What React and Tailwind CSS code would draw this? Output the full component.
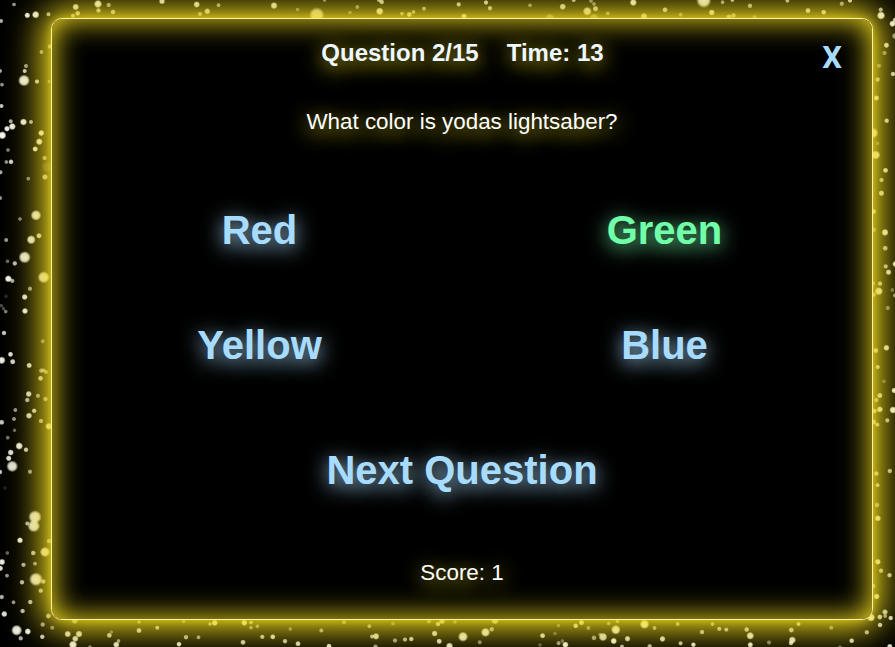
import React from "react";

// Star field: [x, y, radius, opacity]
const STARS = [
  // left strip, top
  [14, 4.5, 1.6, 0.6], [27.3, 15.3, 2.4, 0.95], [35.7, 14.7, 3.2, 0.95], [48.5, 14.3, 1.8, 0.7], [1, 21, 1.8, 0.7],
  [50, 46.5, 2, 0.6], [41.5, 52, 1.7, 0.6], [26, 66, 1.8, 0.6], [24.7, 71, 1.8, 0.8], [24, 80.5, 5.4, 0.95],
  [37, 81.5, 1.9, 0.8], [49, 81.5, 1.3, 0.4], [0, 71, 1.7, 0.7], [2, 84.7, 1.6, 0.6], [1.5, 106, 1.8, 0.8],
  [10.7, 121.3, 1.8, 0.7], [12.3, 126.5, 3, 0.95], [7, 128.7, 2.4, 0.95], [2.3, 135.3, 3.5, 1], [23.5, 122, 3, 0.95],
  [31, 122, 1.7, 0.7], [41.3, 133, 2.6, 0.9], [39.3, 141.7, 2.9, 0.9], [35.2, 149, 2.3, 0.9], [8, 150, 1.6, 0.5],
  [6.3, 162, 1.6, 0.6], [11, 161.8, 2.1, 0.85], [44.7, 158, 2, 0.6], [0.5, 172.3, 1.8, 0.7], [45, 177, 2.4, 0.7],
  [47, 167, 5, 0.15], [28.3, 178.7, 1.7, 0.5], [0, 198, 1.8, 0.6], [36, 215.3, 4.8, 0.9], [20, 219, 1.6, 0.5],
  // left strip, middle
  [39, 235.8, 2.3, 0.8], [31.2, 239.7, 4, 0.9], [6.2, 240, 1.8, 0.6], [24.7, 257.3, 5.6, 0.92], [7.5, 261.3, 1.7, 0.4],
  [14.8, 263.4, 2, 0.75], [8.3, 278.8, 3, 0.98], [12.3, 280.8, 1.9, 0.7], [43.7, 277.3, 5.5, 0.85], [30, 288.7, 1.9, 0.6],
  [24.7, 297, 2.5, 0.9], [25, 311, 2.5, 0.95], [6, 296.3, 1.6, 0.15], [1.3, 305.7, 1.5, 0.3], [3.5, 308.7, 1.5, 0.3],
  [5.7, 311.6, 1.6, 0.5], [4, 333, 2, 0.8], [42.7, 341.3, 1.8, 0.45], [10.5, 354.3, 2.2, 0.9], [1.7, 360.3, 3.3, 0.95],
  [12.7, 361.7, 2.3, 0.85], [29.2, 365.4, 2.3, 0.85], [41.3, 370.6, 2, 0.6], [43.7, 370.4, 1.8, 0.5], [46, 372, 1.8, 0.5],
  [40.6, 378.3, 2.2, 0.75], [28.7, 394, 2.6, 0.85], [27.3, 400, 2, 0.7], [38, 395.8, 1.8, 0.6], [45.5, 399, 2, 0.6],
  [15.3, 410, 1.7, 0.6], [34.2, 410.8, 2, 0.8], [29, 415.7, 2.6, 0.85], [14, 419, 1.7, 0.6], [1.7, 422.3, 2.2, 0.8],
  [41, 421, 1.9, 0.65], [48.8, 426.3, 3, 0.8], [14.5, 430.3, 1.5, 0.4],
  // left strip, bottom
  [7.7, 437.7, 1.7, 0.45], [19.2, 446, 3.2, 0.95], [26, 449.7, 2, 0.8], [10.7, 452.5, 2.6, 0.9], [8.7, 458.3, 2.4, 0.9],
  [12.2, 466.3, 5.3, 0.9], [0, 472, 2, 0.8], [30, 471.7, 1.9, 0.6], [5, 488, 1.7, 0.12], [35, 517, 6.2, 0.9],
  [33.8, 526, 5.8, 0.9], [27.3, 523.5, 1.8, 0.7], [20, 540.3, 2.5, 0.95], [49, 541, 2, 0.6], [7.3, 553, 1.6, 0.4],
  [33.3, 553, 2.1, 0.75], [45, 552, 4.6, 0.85], [2, 562, 2.7, 0.95], [0.3, 568.3, 2.4, 0.9], [23.5, 564.8, 1.9, 0.7],
  [35, 563.7, 1.7, 0.6], [7, 575.7, 1.7, 0.6], [36, 579.3, 6.4, 0.9], [43.3, 581.5, 2, 0.7], [22, 582.3, 2, 0.75],
  [40.8, 590.7, 2, 0.7], [1.7, 597, 2, 0.7], [13.5, 602.3, 1.7, 0.6], [30.3, 602, 2, 0.75], [22.6, 611, 2, 0.75],
  [4.3, 614, 2.6, 0.9], [48.4, 616, 2.2, 0.7],
  // bottom strip
  [16.7, 630.3, 5, 0.95], [27.8, 631.5, 2.7, 0.95], [20.7, 638.3, 2, 0.7], [42.7, 624.5, 2, 0.6], [52.3, 627.7, 1.8, 0.5],
  [42.3, 636.8, 2, 0.8], [67.7, 634, 2.8, 0.85], [79, 634, 3, 0.85], [75.3, 638.7, 2.7, 0.85], [73, 644.7, 3.6, 0.95],
  [74.7, 620.5, 3, 0.6], [109.3, 635.3, 2.2, 0.75], [111.3, 632, 1.4, 0.4], [116.3, 644.7, 2.7, 0.9], [118.5, 641, 1.6, 0.6],
  [90, 647, 1.5, 0.5], [139, 630.5, 2.2, 0.8], [139, 622, 1.5, 0.5], [157.3, 627.7, 1.8, 0.7], [179, 644.2, 2.1, 0.9],
  [186, 637.2, 2, 0.7], [198.5, 637.3, 1.7, 0.6], [183.7, 621.5, 1.6, 0.4], [214.7, 622.8, 2.6, 0.85], [210, 624, 1.5, 0.6],
  [244.3, 622.7, 2.6, 0.85], [251, 622.5, 1.7, 0.6], [251, 627.7, 1.6, 0.5], [257.3, 626.3, 1.6, 0.5], [243, 642.3, 2.2, 0.8],
  [262.3, 636.8, 1.9, 0.75], [272.8, 636.8, 2.2, 0.85], [285, 641.2, 2, 0.75], [298, 643.7, 2.2, 0.85], [290.3, 629, 1.6, 0.4],
  [321.3, 630.5, 1.8, 0.6], [329, 646.2, 2.2, 0.9], [344, 622.2, 1.8, 0.5], [369.3, 626.2, 1.7, 0.6], [376, 636.3, 2.9, 0.85],
  [372, 636.5, 1.8, 0.7], [375.5, 646.7, 2, 0.6], [395, 640.5, 1.9, 0.6], [405, 639.5, 1.9, 0.7], [411.3, 639, 2, 0.8],
  [393, 623.6, 1.6, 0.4], [434.6, 633.5, 2.5, 0.85], [439.2, 641.3, 2.3, 0.85], [429, 621.5, 1.8, 0.5], [438, 624, 2, 0.7],
  [442, 621, 2.7, 0.7], [449.5, 646, 3, 0.9], [455, 622, 1.5, 0.4], [463, 636.7, 4.5, 0.9], [485.5, 632.3, 4.1, 0.9],
  [491.7, 629.3, 2, 0.65], [495, 620.5, 3.3, 0.7], [479.7, 642.3, 1.8, 0.5], [542.6, 635.7, 2.2, 0.85], [555, 633.5, 1.5, 0.3],
  [540, 645, 1.5, 0.3], [558.6, 643.2, 1.8, 0.6], [562.3, 641, 1.5, 0.4], [565.4, 644.7, 2.7, 0.95], [575.7, 625.8, 2.1, 0.8],
  [581.5, 622.5, 2.3, 0.8], [588.4, 628, 1.7, 0.5], [558.5, 625.6, 1.5, 0.35], [608.7, 623.5, 1.6, 0.5], [617.5, 621.5, 1.6, 0.5],
  [594, 637.8, 2.1, 0.6], [603, 636.9, 3.8, 0.85], [600, 634.5, 1.5, 0.4], [615.8, 629.7, 4.3, 0.9], [613.7, 641, 2.7, 0.95], [622, 646.5, 1.7, 0.7],
  [627.5, 638.7, 2.4, 0.85], [644.5, 624.2, 4.2, 0.9], [654.5, 628, 1.7, 0.6], [662.5, 638.9, 2.5, 0.85], [649.7, 646.3, 2, 0.7],
  [677.7, 624, 1.7, 0.6], [680.6, 643.3, 1.8, 0.75], [693.4, 644.7, 2, 0.9], [702, 632, 2, 0.7], [712.5, 624, 1.7, 0.6],
  [719.3, 628.8, 1.9, 0.7], [726.3, 629.6, 1.8, 0.7], [746.7, 629.5, 2.1, 0.75], [750.2, 635.8, 3.3, 0.9], [750.3, 644.8, 2.3, 0.9],
  [769, 642.5, 1.9, 0.45], [792.3, 640, 3.1, 0.9], [791, 643, 2, 0.8], [791.3, 630, 2.2, 0.75], [798.5, 624, 1.8, 0.7],
  [831.3, 627.7, 1.8, 0.5], [851.7, 640.7, 2.1, 0.85], [866.8, 632.3, 2, 0.7], [879.8, 617, 2.2, 0.8], [880, 625, 2.1, 0.8],
  [885, 612, 2.4, 0.8], [885.2, 616, 1.7, 0.6], [890.7, 618, 2, 0.85], [889.8, 646.5, 2.3, 0.9], [840, 647, 1.4, 0.4],
  [871, 617.5, 3.5, 0.95],
  // top strip
  [75.7, 7, 2.8, 0.85], [77.7, 13.3, 2.1, 0.75], [73, 15.7, 1.8, 0.65], [98, 4, 3.5, 0.9], [98.5, 10.5, 2, 0.7],
  [108.7, 5, 1.9, 0.6], [113, 12, 2.1, 0.7], [162, 1.3, 2.5, 0.85], [196.7, 4.5, 2.7, 0.85], [218.5, 5.2, 1.7, 0.6],
  [207.3, 11.3, 2.6, 0.75], [200, 14, 1.8, 0.6], [274, 5.6, 3, 0.85], [297.5, 9.5, 1.6, 0.4], [316.8, 15, 7.2, 0.75],
  [324.5, 0, 1.5, 0.5], [357.3, 7, 1.7, 0.5], [350, 12.5, 1.5, 0.4], [379.7, 11.3, 3.3, 0.85], [381.7, 2, 2, 0.75],
  [379, 0, 1.8, 0.7], [424, 8.7, 1.8, 0.6], [409.3, 14.5, 2.2, 0.75], [402, 13.7, 1.6, 0.6], [413.5, 12, 1.6, 0.6],
  [458.7, 4.4, 1.9, 0.75], [486, 2.5, 1.9, 0.8], [490, 8.2, 2, 0.7], [464, 16.3, 2.5, 0.75], [530, 5.3, 1.6, 0.5],
  [562.7, 6.7, 2.7, 0.8], [573.7, 0, 1.8, 0.7], [591, 1, 1.6, 0.5], [587.3, 11.3, 3.9, 0.8], [595.5, 8.7, 2.4, 0.75],
  [594, 4, 1.6, 0.5], [607.7, 13.4, 1.7, 0.5], [633.3, 2.5, 3, 0.9], [665, 9.8, 2.2, 0.75], [644, 16.4, 2.9, 0.75],
  [680.7, 14.6, 1.7, 0.5], [703.8, 0.5, 7, 0.9], [722.6, 2.2, 1.6, 0.6], [732.3, 0, 1.7, 0.7], [711.7, 12.5, 2.6, 0.8],
  [750, 5.8, 2, 0.65], [733.5, 15.5, 2, 0.6], [729, 17, 2.4, 0.6], [754.5, 17.3, 1.8, 0.4], [787.4, 0.7, 1.7, 0.7],
  [550, 18, 4, 0.4], [594, 18, 4, 0.4], [808, 10.6, 2.2, 0.8], [823.7, 12.2, 2.1, 0.8], [841.8, 3.7, 1.9, 0.6], [850, 0.5, 1.9, 0.8],
  // right strip
  [881, 15.5, 3.6, 0.95], [880.7, 9.7, 1.9, 0.7], [892.5, 23.7, 2.7, 0.95], [895, 20, 2, 0.8], [895, 36, 2.7, 0.6],
  [886.4, 45.2, 2.3, 0.85], [884.5, 53, 1.9, 0.5], [893, 74, 2, 0.8], [879, 65.7, 1.8, 0.45], [877.6, 79.5, 2, 0.65],
  [876.4, 98, 2.3, 0.85], [886.7, 120.7, 2, 0.8], [873, 133, 4.7, 0.85], [875.7, 155, 4, 0.85], [877.5, 143.5, 1.7, 0.3],
  [885.5, 170.3, 2.2, 0.85], [881.5, 180, 1.9, 0.7], [881.4, 193.2, 2.4, 0.8], [873.5, 211.5, 2.4, 0.7], [873.7, 229.8, 2, 0.5],
  [885, 232.4, 3, 0.9], [885.2, 248.2, 2.2, 0.7], [885.7, 266.4, 1.9, 0.7], [888.5, 272.2, 2.4, 0.85], [895.5, 264, 2.7, 0.9],
  [880, 283.6, 2, 0.7], [873, 283.5, 1.8, 0.5], [878.8, 291.2, 3.6, 0.85], [892.3, 290, 1.7, 0.35], [895, 295.5, 1.8, 0.6],
  [873.7, 294.7, 2, 0.6], [887.8, 308, 1.9, 0.45], [886.4, 347.8, 2.6, 0.85], [875.8, 350.5, 2.2, 0.75], [877.7, 367, 1.9, 0.7],
  [884, 381.3, 1.7, 0.3], [894.3, 390.5, 2.4, 0.95], [879.8, 395.5, 2.3, 0.8], [876.3, 400, 2, 0.6], [879.8, 409.4, 2.6, 0.85],
  [874.5, 411, 2.1, 0.7], [893, 410, 3.1, 0.95], [887.3, 420.4, 1.9, 0.7], [873.7, 422, 2.2, 0.7], [877.3, 424.6, 1.8, 0.7],
  [889.8, 471, 2, 0.7], [876.3, 473.5, 2.1, 0.7], [877.5, 485.2, 1.8, 0.7], [877, 505, 2, 0.6], [877.8, 518.3, 2.6, 0.85],
  [877.8, 561.8, 2.5, 0.85], [881, 570.7, 2, 0.7], [889.5, 575.2, 2, 0.75], [873.3, 586, 2, 0.6], [876.6, 596.5, 2.5, 0.85],
];

function StarField() {
  return (
    <svg className="absolute inset-0" width="895" height="647" viewBox="0 0 895 647" aria-hidden="true">
      <defs>
        <radialGradient id="star">
          <stop offset="0" stopColor="#fffdf2" />
          <stop offset="0.6" stopColor="#fffdf2" stopOpacity="0.92" />
          <stop offset="1" stopColor="#fffdf2" stopOpacity="0" />
        </radialGradient>
      </defs>
      {STARS.map(([x, y, r, o], i) => (
        <circle key={i} cx={x} cy={y} r={r + 0.7} fill="url(#star)" opacity={o} />
      ))}
    </svg>
  );
}

const ANSWERS = [
  { label: "Red", correct: false },
  { label: "Green", correct: true },
  { label: "Yellow", correct: false },
  { label: "Blue", correct: false },
];

const BLUE = "text-[#a8dcff] [text-shadow:0_4px_20px_#a8dcff]";
const GREEN = "text-[#72ffaa] [text-shadow:0_4px_20px_#72ffaa]";

export default function App() {
  return (
    <div className="relative h-[647px] w-[895px] overflow-hidden bg-black font-['Liberation_Sans',Arial,sans-serif] text-white">
      <StarField />
      <div className="relative ml-[51px] pt-[18px]">
        <main className="relative flex h-[602px] w-[822px] flex-col items-center rounded-[11px] border border-[#fff3a0] bg-black shadow-[0_0_36px_8px_#ffe81f,0_0_10px_#ffe81f80,inset_0_0_30px_#ffe81f] [text-shadow:0_4px_20px_#ffe81f]">
          <button className="absolute top-[18px] right-[30px] font-['Roboto',sans-serif] text-[31px] leading-[41px] font-bold text-[#a8dcff] [text-shadow:none]">
            X
          </button>
          <header className="mt-5 flex gap-7 pl-px text-[24px] leading-7 font-bold text-[#f0f8ff]">
            <span>Question 2/15</span>
            <span>Time: 13</span>
          </header>
          <p className="mt-[42px] text-[22.4px] leading-[26px]">What color is yodas lightsaber?</p>
          <div className="mt-[72px] grid w-[810px] grid-cols-2 gap-y-[69px]">
            {ANSWERS.map((a) => (
              <button key={a.label} className={`text-[40px] leading-[46px] font-bold ${a.correct ? GREEN : BLUE}`}>
                {a.label}
              </button>
            ))}
          </div>
          <button className={`mt-[79px] text-[40px] leading-[46px] font-bold ${BLUE}`}>Next Question</button>
          <p className="mt-[67px] text-[22.4px] leading-[26px]">Score: 1</p>
        </main>
      </div>
    </div>
  );
}
